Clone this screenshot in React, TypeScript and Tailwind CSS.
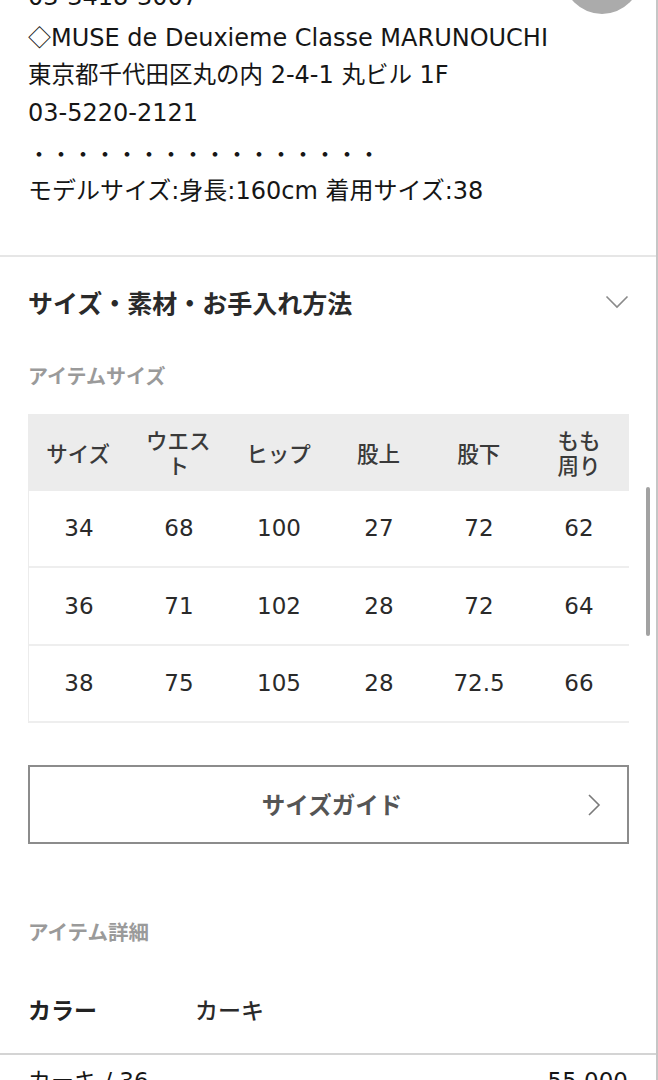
import React from "react";

const FONT = '"DejaVu Sans", "Noto Sans CJK JP", sans-serif';
const CJK = '"Noto Sans CJK JP", sans-serif';

const header: string[][] = [
  ["サイズ"],
  ["ウエス", "ト"],
  ["ヒップ"],
  ["股上"],
  ["股下"],
  ["もも", "周り"],
];

const rows = [
  ["34", "68", "100", "27", "72", "62"],
  ["36", "71", "102", "28", "72", "64"],
  ["38", "75", "105", "28", "72.5", "66"],
];

export default function App() {
  return (
    <div
      className="relative w-[658px] h-[1080px] overflow-hidden bg-white border-r-2 border-[#c6c6c6] text-[#161616]"
      style={{ fontFamily: FONT }}
    >
      {/* round button partially visible at top */}
      <div className="absolute left-[563px] top-[-64px] w-[78px] h-[78px] rounded-full bg-[#ababab]" />

      {/* store info */}
      <div className="mt-[-22px] px-[28px] pb-[44px] text-[24px] leading-[38.8px]">
        <div className="h-[38.8px]">03-3418-3007</div>
        <div className="h-[38.8px]">
          <span className="text-[23px]" style={{ fontFamily: CJK }}>◇</span>MUSE de Deuxieme Classe MARUNOUCHI
        </div>
        <div className="h-[38.8px]">
          <span className="text-[23.5px]">東京都千代田区丸の内</span> 2-4-1 <span className="text-[23.5px]">丸ビル</span> 1F
        </div>
        <div className="h-[38.8px]">03-5220-2121</div>
        <div className="h-[38.8px] text-[22px]" style={{ fontFamily: CJK }}>
          ・・・・・・・・・・・・・・・・
        </div>
        <div className="h-[38.8px]">モデルサイズ:身長:160cm 着用サイズ:38</div>
      </div>

      <div className="h-[2px] bg-[#e6e6e6]" />

      {/* accordion */}
      <div className="px-[28px]">
        <div className="mt-[26px] flex items-center justify-between h-[39px]">
          <div
            className="text-[25px] font-bold text-[#2a2a2a] leading-[39px]"
            style={{ fontFamily: CJK }}
          >
            サイズ・素材・お手入れ方法
          </div>
          <svg width="24" height="14" viewBox="0 0 24 14" className="mr-[-1px]">
            <path d="M1.5 1.5 L12 12 L22.5 1.5" fill="none" stroke="#8a8a8a" strokeWidth="1.6" />
          </svg>
        </div>

        <div
          className="mt-[40px] h-[28px] text-[20px] leading-[28px] font-bold text-[#9a9a9a]"
          style={{ fontFamily: CJK }}
        >
          アイテムサイズ
        </div>

        {/* table */}
        <div className="mt-[24px] w-[601px]">
          <div
            className="grid grid-cols-6 h-[77px] bg-[#ececec] text-[#3a3a3a] text-[21.5px] font-medium"
            style={{ fontFamily: CJK }}
          >
            {header.map((h, i) => (
              <div key={i} className="flex flex-col items-center justify-center text-center">
                {h.map((line, li) => (
                  <div key={li} className="h-[25px] leading-[25px]">
                    {line}
                  </div>
                ))}
              </div>
            ))}
          </div>
          <div className="border-l border-[#ececec]">
            {rows.map((r, ri) => (
              <div
                key={ri}
                className="grid grid-cols-6 h-[77.5px] border-b-2 border-[#eeeeee] text-[23px] text-[#2a2a2a]"
              >
                {r.map((c, ci) => (
                  <div key={ci} className="flex items-center justify-center">
                    {c}
                  </div>
                ))}
              </div>
            ))}
          </div>
        </div>

        {/* size guide button */}
        <div className="mt-[42px] w-[601px] h-[79px] border-2 border-[#8c8c8c] relative flex items-center justify-center">
          <span
            className="ml-[7px] text-[23.5px] font-bold text-[#555555]"
            style={{ fontFamily: CJK }}
          >
            サイズガイド
          </span>
          <svg
            width="14"
            height="24"
            viewBox="0 0 14 24"
            className="absolute right-[26px] top-1/2 -translate-y-1/2"
          >
            <path d="M2 2 L12 12 L2 22" fill="none" stroke="#7a7a7a" strokeWidth="1.6" />
          </svg>
        </div>

        <div
          className="mt-[73px] h-[28px] text-[20.5px] leading-[28px] font-bold text-[#9a9a9a]"
          style={{ fontFamily: CJK }}
        >
          アイテム詳細
        </div>

        <div
          className="mt-[48px] flex items-center h-[32px] text-[23px]"
          style={{ fontFamily: CJK }}
        >
          <span className="w-[167px] font-bold text-[#222]">カラー</span>
          <span className="font-medium text-[#2a2a2a]">カーキ</span>
        </div>
      </div>

      <div className="mt-[28px] h-[2px] bg-[#d4d4d4]" />

      <div className="px-[28px] mt-[8px] flex justify-between text-[23px] leading-[36px]">
        <span>カーキ / 36</span>
        <span>55,000</span>
      </div>

      {/* scroll indicator */}
      <div className="absolute left-[646px] top-[487px] w-[4px] h-[149px] rounded-full bg-[#a2a2a2]" />
    </div>
  );
}
